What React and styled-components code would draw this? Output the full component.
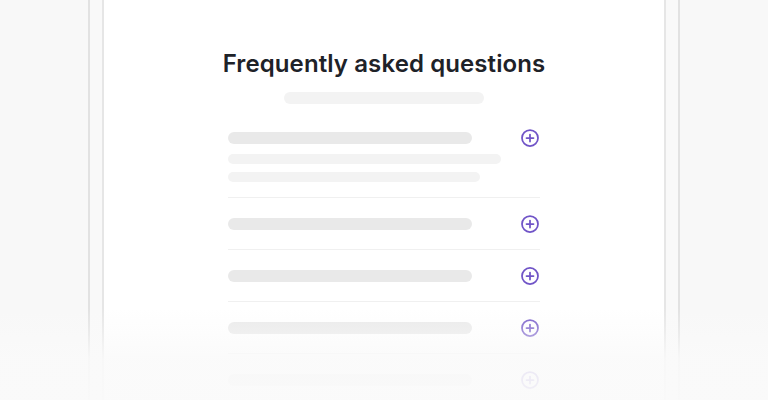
import styled, { createGlobalStyle } from 'styled-components'

const GlobalStyle = createGlobalStyle`
    html, body {
        margin: 0;
        padding: 0;
        background: #f8f8f8;
    }
`

const Page = styled.div`
    position: relative;
    height: 400px;
    overflow: hidden;
    display: flex;
    justify-content: center;
    background: #f8f8f8;
    font-family: Inter, "Liberation Sans", sans-serif;
`

// device frame

const Device = styled.div`
    width: 592px;
    padding: 0 12px;
    box-sizing: border-box;
    border-left: 2px solid #e2e2e2;
    border-right: 2px solid #e2e2e2;
    background: #f9f9f9;
`

const Screen = styled.div`
    height: 100%;
    border-left: 2px solid #e6e6e6;
    border-right: 2px solid #e6e6e6;
    background: #fff;
    display: flex;
    flex-direction: column;
    align-items: center;
    padding-top: 48px;
    box-sizing: border-box;

    > * {
        flex-shrink: 0;
    }
`

const Title = styled.h1`
    margin: 0;
    font-size: 24px;
    line-height: 32px;
    font-weight: 600;
    color: #1e2228;
    letter-spacing: 0.1px;
`

const Subtitle = styled.div`
    width: 200px;
    height: 12px;
    margin-top: 12px;
    border-radius: 6px;
    background: #f3f3f3;
`

// faq list

const List = styled.div`
    width: 312px;
    margin-top: 8px;
`

const Row = styled.div`
    display: flex;
    align-items: flex-start;
    justify-content: space-between;
    padding: 20px 0 ${props => (props.open ? '15px' : '19px')};
    border-bottom: 1px solid #f0f0f0;
`

const Body = styled.div`
    display: flex;
    flex-direction: column;
`

const Bar = styled.div`
    width: ${props => props.width}px;
    height: ${props => (props.answer ? 10 : 12)}px;
    margin-top: ${props => props.gap || 0}px;
    border-radius: 6px;
    background: ${props => (props.answer ? '#f3f3f3' : '#e9e9e9')};
`

const Icon = styled.svg`
    width: 20px;
    height: 20px;
    margin: -4px 0;
    flex-shrink: 0;
`

const Fade = styled.div`
    position: absolute;
    left: 0;
    right: 0;
    bottom: 0;
    height: 92px;
    background: linear-gradient(
        to bottom,
        rgba(250, 250, 250, 0) 0%,
        rgba(250, 250, 250, 0.35) 25%,
        rgba(250, 250, 250, 0.88) 55%,
        rgba(250, 250, 250, 0.95) 100%
    );
    pointer-events: none;
`

function PlusIcon() {
    return (
        <Icon viewBox="0 0 20 20" fill="none" stroke="#7054c7" strokeWidth="1.75" strokeLinecap="round">
            <circle cx="10" cy="10" r="8" />
            <path d="M10 6.5v7M6.5 10h7" />
        </Icon>
    )
}

const rows = [
    { open: true, answers: [273, 252] },
    { answers: [] },
    { answers: [] },
    { answers: [] },
    { answers: [] },
]

export default function App() {
    return (
        <Page>
            <GlobalStyle />
            <Device>
                <Screen>
                    <Title>Frequently asked questions</Title>
                    <Subtitle />
                    <List>
                        {rows.map((row, i) => (
                            <Row key={i} open={row.open}>
                                <Body>
                                    <Bar width={244} />
                                    {row.answers.map((w, j) => (
                                        <Bar key={j} answer width={w} gap={j === 0 ? 10 : 8} />
                                    ))}
                                </Body>
                                <PlusIcon />
                            </Row>
                        ))}
                    </List>
                </Screen>
            </Device>
            <Fade />
        </Page>
    )
}
